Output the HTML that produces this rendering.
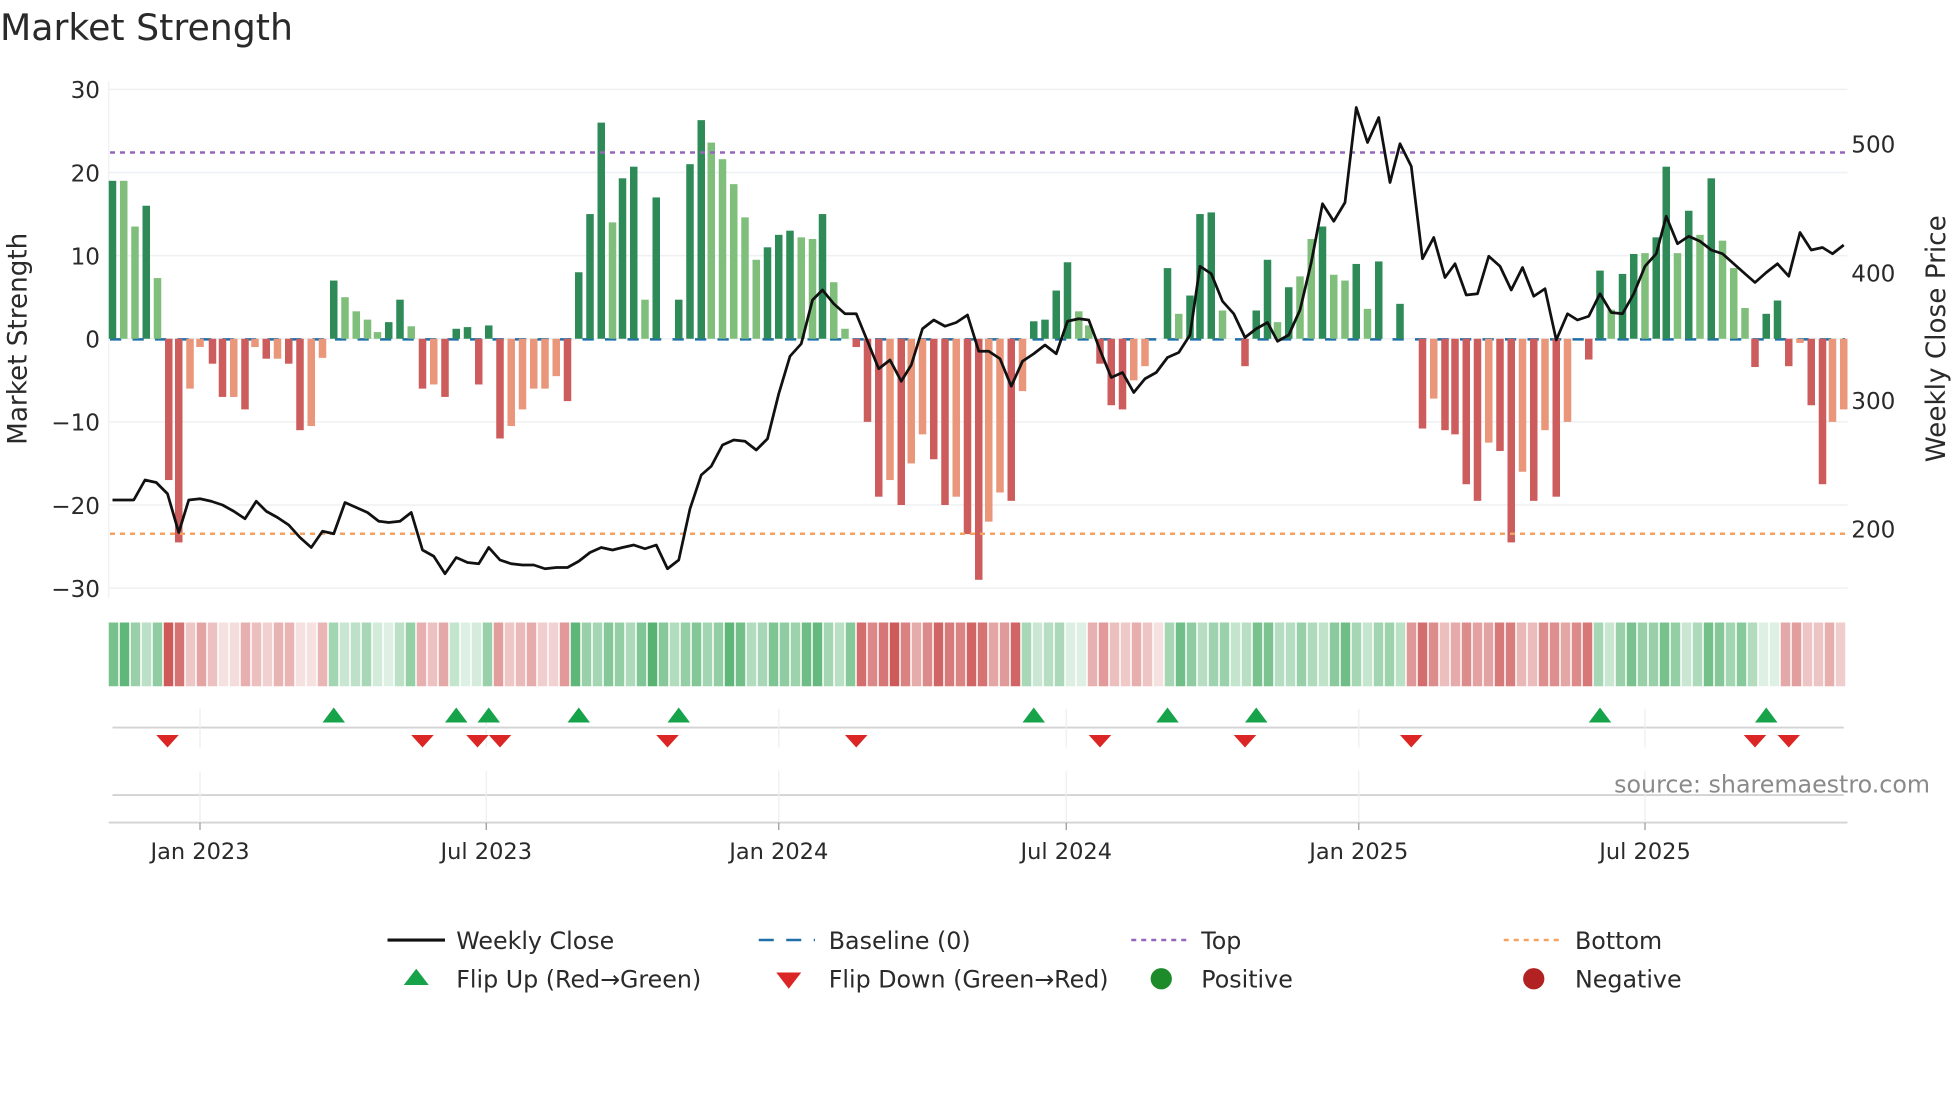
<!DOCTYPE html>
<html><head><meta charset="utf-8">
<style>
html,body{margin:0;padding:0;background:#fff;width:1960px;height:1102px;overflow:hidden}
svg{display:block}
text{font-family:"DejaVu Sans","Liberation Sans",sans-serif;fill:#2a2a2a}
</style></head>
<body>
<svg id="s" width="1960" height="1102" viewBox="0 0 1568 881.6" xmlns="http://www.w3.org/2000/svg">
<text x="0" y="32" font-size="29">Market Strength</text>
<g id="g"></g>
</svg>
<script>
var NS="http://www.w3.org/2000/svg",g=document.getElementById('g');
function el(t,a,txt){var e=document.createElementNS(NS,t);for(var k in a)e.setAttribute(k,a[k]);if(txt!=null)e.textContent=txt;g.appendChild(e);return e;}
function Y(v){return 271-v*6.65;}
[30,20,10,0,-10,-20,-30].forEach(function(v){el('line',{x1:87,x2:1478,y1:Y(v),y2:Y(v),stroke:'#eef0f3','stroke-width':1.2});
 el('text',{x:80,y:Y(v)+7,'font-size':18.5,'text-anchor':'end'},(v<0?'\u2212'+(-v):''+v));});
el('line',{x1:87,x2:87,y1:65,y2:478,stroke:'#eef0f3'});
[[500,115],[400,218],[300,320],[200,423]].forEach(function(p){el('text',{x:1481,y:p[1]+7,'font-size':18.5},''+p[0]);});
el('text',{transform:'translate(21,271) rotate(-90)','font-size':21,'text-anchor':'middle'},'Market Strength');
el('text',{transform:'translate(1556,271) rotate(-90)','font-size':21,'text-anchor':'middle'},'Weekly Close Price');
el('line',{x1:88,x2:1476,y1:271.5,y2:271.5,stroke:'#1f6fa8','stroke-width':2,'stroke-dasharray':'9,9'});
var B=[[90,19,'d'],[99,19,'l'],[108,13.5,'l'],[117,16,'d'],[126,7.3,'l'],[135,-17,'r'],[143,-24.5,'r'],[152,-6,'s'],[160,-1,'s'],[170,-3,'r'],[178,-7,'r'],[187,-7,'s'],[196,-8.5,'r'],[204,-1,'s'],[213,-2.4,'r'],[222,-2.4,'s'],[231,-3,'r'],[240,-11,'r'],[249,-10.5,'s'],[258,-2.3,'s'],[267,7,'d'],[276,5,'l'],[285,3.3,'l'],[294,2.3,'l'],[302,0.8,'l'],[311,2,'d'],[320,4.7,'d'],[329,1.5,'l'],[338,-6,'r'],[347,-5.5,'s'],[356,-7,'r'],[365,1.2,'d'],[374,1.4,'d'],[383,-5.5,'r'],[391,1.6,'d'],[400,-12,'r'],[409,-10.5,'s'],[418,-8.5,'s'],[427,-6,'s'],[436,-6,'s'],[445,-4.5,'s'],[454,-7.5,'r'],[463,8,'d'],[472,15,'d'],[481,26,'d'],[490,14,'l'],[498,19.3,'d'],[507,20.7,'d'],[516,4.7,'l'],[525,17,'d'],[543,4.7,'d'],[552,21,'d'],[561,26.3,'d'],[569,23.6,'l'],[578,21.6,'l'],[587,18.6,'l'],[596,14.6,'l'],[605,9.5,'l'],[614,11,'d'],[623,12.5,'d'],[632,13,'d'],[641,12.2,'l'],[650,12,'l'],[658,15,'d'],[667,6.8,'l'],[676,1.2,'l'],[685,-1,'r'],[694,-10,'r'],[703,-19,'r'],[712,-17,'s'],[721,-20,'r'],[729,-15,'s'],[738,-11.5,'s'],[747,-14.5,'r'],[756,-20,'r'],[765,-19,'s'],[774,-23.5,'r'],[783,-29,'r'],[791,-22,'s'],[800,-18.5,'s'],[809,-19.5,'r'],[818,-6.3,'s'],[827,2.1,'d'],[836,2.3,'d'],[845,5.8,'d'],[854,9.2,'d'],[863,3.3,'l'],[871,1.6,'l'],[880,-3,'r'],[889,-8,'r'],[898,-8.5,'r'],[907,-5,'s'],[916,-3.3,'s'],[934,8.5,'d'],[943,3,'l'],[952,5.2,'d'],[960,15,'d'],[969,15.2,'d'],[978,3.4,'l'],[996,-3.3,'r'],[1005,3.4,'d'],[1014,9.5,'d'],[1022,2,'l'],[1031,6.2,'d'],[1040,7.5,'l'],[1049,12,'l'],[1058,13.5,'d'],[1067,7.7,'l'],[1076,7,'l'],[1085,9,'d'],[1094,3.6,'l'],[1103,9.3,'d'],[1120,4.2,'d'],[1138,-10.8,'r'],[1147,-7.2,'s'],[1156,-11,'r'],[1164,-11.5,'r'],[1173,-17.5,'r'],[1182,-19.5,'r'],[1191,-12.5,'s'],[1200,-13.5,'r'],[1209,-24.5,'r'],[1218,-16,'s'],[1227,-19.5,'r'],[1236,-11,'s'],[1245,-19,'r'],[1254,-10,'s'],[1271,-2.5,'r'],[1280,8.2,'d'],[1289,3.5,'l'],[1298,7.8,'d'],[1307,10.2,'d'],[1316,10.3,'l'],[1325,12.2,'d'],[1333,20.7,'d'],[1342,10.3,'l'],[1351,15.4,'d'],[1360,12.5,'l'],[1369,19.3,'d'],[1378,11.8,'l'],[1387,8.5,'l'],[1396,3.7,'l'],[1404,-3.4,'r'],[1413,3,'d'],[1422,4.6,'d'],[1431,-3.3,'r'],[1440,-0.5,'s'],[1449,-8,'r'],[1458,-17.5,'r'],[1466,-10,'s'],[1475,-8.5,'s']];
var C={d:'#2e8b57',l:'#7fbf7b',r:'#cd5c5c',s:'#e9967a'};
B.forEach(function(b){var y0=Y(0),y1=Y(b[1]);el('rect',{x:b[0]-3,y:Math.min(y0,y1),width:6,height:Math.abs(y1-y0),fill:C[b[2]]});});
el('line',{x1:88,x2:1476,y1:122,y2:122,stroke:'#9467bd','stroke-width':2,'stroke-dasharray':'4,4'});
el('line',{x1:88,x2:1476,y1:427,y2:427,stroke:'#f4a261','stroke-width':2,'stroke-dasharray':'4,4'});
var P="90,400 107,400 116,384 125,386 134,395 143,426 151,400 160,399 169,401 178,404 187,409 196,415 205,401 213,409 222,414 231,420 240,430 249,438 258,425 267,427 276,402 285,406 294,410 303,417 311,418 320,417 329,410 338,440 347,445 356,459 365,446 374,450 383,451 391,438 400,448 409,451 418,452 427,452 436,455 445,454 454,454 463,449 472,442 481,438 490,440 498,438 507,436 516,439 525,436 534,455 543,448 552,407 561,380 569,373 578,356 587,352 596,353 605,360 614,351 623,315 632,285 641,275 650,240 658,232 667,243 676,251 685,251 694,273 703,295 712,288 721,305 729,292 738,263 747,256 756,261 765,258 774,252 783,281 791,281 800,287 809,309 818,289 827,283 836,276 845,283 854,257 863,255 871,256 880,280 889,302 898,298 907,314 916,303 925,298 934,286 943,282 952,268 960,213 969,219 978,241 987,251 996,270 1005,263 1014,258 1022,273 1031,268 1040,248 1049,210 1058,163 1067,177 1076,162 1085,86 1094,114 1103,94 1112,146 1120,115 1129,133 1138,207 1147,190 1156,222 1164,211 1173,236 1182,235 1191,205 1200,213 1209,232 1218,214 1227,237 1236,231 1245,272 1254,251 1262,256 1271,253 1280,235 1289,250 1298,251 1307,235 1316,213 1325,203 1333,173 1342,195 1351,189 1360,193 1369,200 1378,203 1387,211 1396,219 1404,226 1413,218 1422,211 1431,221 1440,186 1449,200 1458,198 1466,203 1475,196";
el('polyline',{points:P,fill:'none',stroke:'#111','stroke-width':2.2,'stroke-linejoin':'round'});
var segs=[[87,127,'g',0.55],[128,146,'r',0.8],[147,262,'r',0.3],[263,332,'g',0.3],[333,358,'r',0.4],[359,394,'g',0.28],[395,457,'r',0.4],[458,531,'g',0.55],[532,537,'r',0.18],[538,680,'g',0.55],[681,820,'r',0.7],[821,873,'g',0.3],[874,928,'r',0.35],[929,1124,'g',0.45],[1125,1271,'r',0.55],[1272,1401,'g',0.5],[1402,1422,'g',0.28],[1423,1478,'r',0.35]];
function hc(x){for(var i=0;i<segs.length;i++)if(x>=segs[i][0]&&x<=segs[i][1])return segs[i];return segs[0];}
for(var i=0;i<158;i++){var x=87+i*8.8;if(x>1472)break;var s=hc(x+4);var j=(Math.sin(i*1.7)*0.15+Math.cos(i*0.9)*0.1);var a=Math.max(0.16,Math.min(0.9,s[3]+j));
 var col=s[2]=='g'?'rgba(46,160,80,'+a+')':'rgba(200,70,70,'+a+')';
 el('rect',{x:x.toFixed(2),y:498,width:7.6,height:51,fill:col});}
el('line',{x1:90,x2:1475,y1:582,y2:582,stroke:'#d3d3d3','stroke-width':1.5});
el('line',{x1:90,x2:1475,y1:636,y2:636,stroke:'#d3d3d3','stroke-width':1.5});
el('line',{x1:87,x2:1478,y1:658,y2:658,stroke:'#d3d3d3','stroke-width':1.5});
[[160,'Jan 2023'],[389,'Jul 2023'],[623,'Jan 2024'],[853,'Jul 2024'],[1087,'Jan 2025'],[1316,'Jul 2025']].forEach(function(t){
 el('line',{x1:t[0],x2:t[0],y1:567,y2:598,stroke:'#eceef1'});el('line',{x1:t[0],x2:t[0],y1:617,y2:658,stroke:'#eceef1'});
 el('line',{x1:t[0],x2:t[0],y1:658,y2:664,stroke:'#999'});
 el('text',{x:t[0],y:687,'font-size':18,'text-anchor':'middle'},t[1]);});
[267,365,391,463,543,827,934,1005,1280,1413].forEach(function(x){el('path',{d:'M'+(x-9)+' 578L'+x+' 566L'+(x+9)+' 578Z',fill:'#16a34a'});});
[134,338,382,400,534,685,880,996,1129,1404,1431].forEach(function(x){el('path',{d:'M'+(x-9)+' 588L'+(x+9)+' 588L'+x+' 598Z',fill:'#dc2626'});});
el('text',{x:1544,y:634,'font-size':19,'text-anchor':'end',style:'fill:#8a8a8a'},'source: sharemaestro.com');
el('line',{x1:310,x2:356,y1:752,y2:752,stroke:'#111','stroke-width':2.5});
el('text',{x:365,y:759,'font-size':19},'Weekly Close');
el('line',{x1:607,x2:652,y1:752,y2:752,stroke:'#1f6fa8','stroke-width':2,'stroke-dasharray':'12,10'});
el('text',{x:663,y:759,'font-size':19},'Baseline (0)');
el('line',{x1:905,x2:950,y1:752,y2:752,stroke:'#9467bd','stroke-width':2,'stroke-dasharray':'4,4'});
el('text',{x:961,y:759,'font-size':19},'Top');
el('line',{x1:1203,x2:1248,y1:752,y2:752,stroke:'#f4a261','stroke-width':2,'stroke-dasharray':'4,4'});
el('text',{x:1260,y:759,'font-size':19},'Bottom');
el('path',{d:'M323 788L333 775L343 788Z',fill:'#16a34a'});
el('text',{x:365,y:790,'font-size':19},'Flip Up (Red\u2192Green)');
el('path',{d:'M621 778L641 778L631 791Z',fill:'#dc2626'});
el('text',{x:663,y:790,'font-size':19},'Flip Down (Green\u2192Red)');
el('circle',{cx:929,cy:783,r:8.5,fill:'#1e8b2a'});
el('text',{x:961,y:790,'font-size':19},'Positive');
el('circle',{cx:1227,cy:783,r:8.5,fill:'#b22222'});
el('text',{x:1260,y:790,'font-size':19},'Negative');
</script>
</body></html>
